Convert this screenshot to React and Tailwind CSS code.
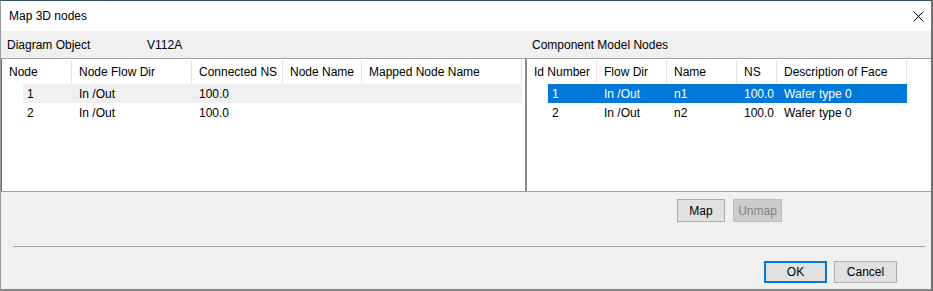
import React from 'react';

const leftCols = [
    { label: 'Node', w: 70 },
    { label: 'Node Flow Dir', w: 120 },
    { label: 'Connected NS', w: 91 },
    { label: 'Node Name', w: 79 },
    { label: 'Mapped Node Name', w: 160 },
];

const rightCols = [
    { label: 'Id Number', w: 70 },
    { label: 'Flow Dir', w: 70 },
    { label: 'Name', w: 70 },
    { label: 'NS', w: 40 },
    { label: 'Description of Face', w: 130 },
];

const leftRows = [
    ['1', 'In /Out', '100.0', '', ''],
    ['2', 'In /Out', '100.0', '', ''],
];

const rightRows = [
    ['1', 'In /Out', 'n1', '100.0', 'Wafer type 0'],
    ['2', 'In /Out', 'n2', '100.0', 'Wafer type 0'],
];

const ListView = ({ cols, rows, selected, focused }) => (
    <div className="flex flex-col">
        <div className="flex h-[25px]">
            {cols.map((c, i) => (
                <div
                    key={i}
                    style={{ width: c.w }}
                    className="flex items-center pl-[7px] border-r border-[#e5e5e5] my-[1px] whitespace-nowrap"
                >
                    {c.label}
                </div>
            ))}
        </div>
        {rows.map((r, ri) => {
            const sel = ri === selected;
            const bg = sel ? (focused ? 'bg-[#0078d7] text-white' : 'bg-[#f0f0f0]') : '';
            return (
                <div key={ri} className={`flex h-[19px] ml-[21px] ${bg}`} style={{ width: cols.reduce((a, c) => a + c.w, 0) - 21 }}>
                    {r.map((v, ci) => (
                        <div
                            key={ci}
                            style={{ width: ci === 0 ? cols[0].w - 21 : cols[ci].w }}
                            className={`flex items-center whitespace-nowrap ${ci === 0 ? 'pl-[4px]' : 'pl-[7px]'}`}
                        >
                            {v}
                        </div>
                    ))}
                </div>
            );
        })}
    </div>
);

const Button = ({ children, className = '', disabled }) => (
    <div
        className={`flex items-center justify-center border ${
            disabled ? 'bg-[#cccccc] border-[#bfbfbf] text-[#838383]' : 'bg-[#e1e1e1] border-[#adadad] text-black'
        } ${className}`}
    >
        {children}
    </div>
);

export default function App() {
    return (
        <div className="w-[933px] h-[291px] flex flex-col bg-[#f0f0f0] text-[12px] text-black font-['Liberation_Sans',Arial,sans-serif] border-t border-t-[#2f5560] border-r-2 border-r-[#6f6f6f] border-b-2 border-b-[#8a8a8a] border-l border-l-[#9a9a9a] overflow-hidden">
            {/* Title bar */}
            <div className="h-[30px] bg-white flex items-center justify-between pl-[8px] pr-[8px] shrink-0">
                <span>Map 3D nodes</span>
                <svg width="11" height="11" viewBox="0 0 11 11" className="-mr-[1px]">
                    <path d="M0.5 0.5 L10.5 10.5 M10.5 0.5 L0.5 10.5" stroke="#000" strokeWidth="1" />
                </svg>
            </div>

            {/* Captions */}
            <div className="h-[27px] flex items-center shrink-0">
                <div className="w-[525px] flex pl-[6px]">
                    <span className="w-[140px]">Diagram Object</span>
                    <span>V112A</span>
                </div>
                <div className="pl-[6px]">Component Model Nodes</div>
            </div>

            {/* Lists */}
            <div className="h-[134px] flex shrink-0 border-t border-[#a0a0a0] border-b border-b-[#a0a0a0]">
                <div className="w-[524px] bg-white border-l border-[#6b6b6b] shrink-0">
                    <ListView cols={leftCols} rows={leftRows} selected={0} focused={false} />
                </div>
                <div className="w-[2px] bg-[#8c8c8c] shrink-0" />
                <div className="flex-1 bg-white">
                    <ListView cols={rightCols} rows={rightRows} selected={0} focused={true} />
                </div>
            </div>

            {/* Map / Unmap */}
            <div className="flex gap-[8px] pl-[676px] mt-[7px] shrink-0">
                <Button className="w-[48px] h-[23px]">Map</Button>
                <Button className="w-[49px] h-[23px]" disabled>Unmap</Button>
            </div>

            {/* Separator */}
            <div className="mt-[24px] ml-[12px] mr-[6px] h-[1px] bg-[#a0a0a0] shrink-0" />

            {/* OK / Cancel */}
            <div className="flex gap-[7px] pl-[763px] mt-[14px] shrink-0">
                <Button className="w-[63px] h-[22px] !border-2 !border-[#0078d7]">OK</Button>
                <Button className="w-[63px] h-[22px]">Cancel</Button>
            </div>
        </div>
    );
}
